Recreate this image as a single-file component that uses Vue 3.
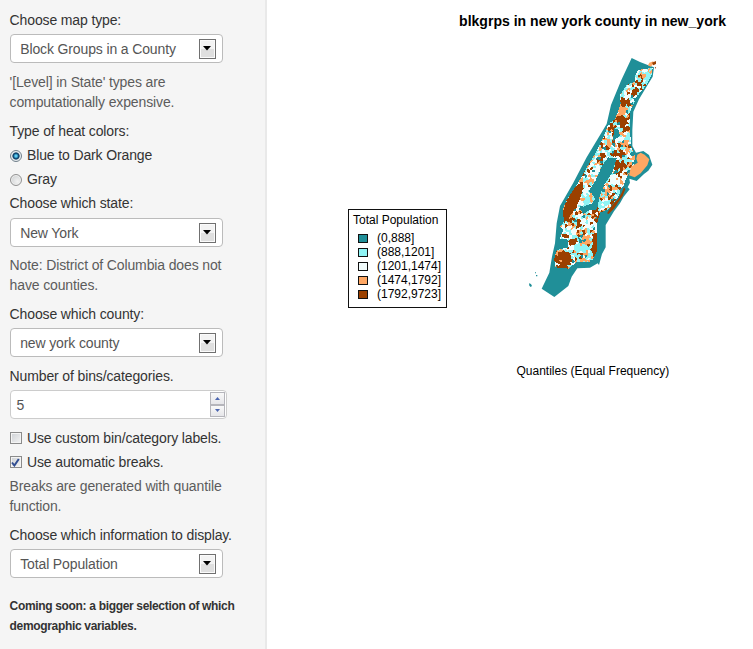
<script setup>
const teal = '#208f98'
const aqua = '#8ff4f5'
const pale = '#f2fcfc'
const orange = '#ffa763'
const brown = '#9b4000'

const bins = [
  { color: teal, label: '(0,888]' },
  { color: aqua, label: '(888,1201]' },
  { color: pale, label: '(1201,1474]' },
  { color: orange, label: '(1474,1792]' },
  { color: brown, label: '(1792,9723]' },
]

const unit = 3
const trace = (points) => points.map(([x, y]) => [x / unit, y / unit])

// County boundary, water block groups included
const boundary = trace([
  [335, 24], [360, 36], [385, 46], [402, 52], [398, 80], [384, 103], [357, 148], [340, 185], [337, 240],
  [337, 288], [348, 308], [370, 303], [387, 315], [397, 344], [385, 362], [372, 372], [350, 393],
  [328, 386], [330, 398], [323, 412], [329, 418], [311, 440], [300, 460], [282, 484], [257, 525],
  [257, 592], [246, 612], [237, 645], [233, 640], [210, 653], [172, 655], [155, 680], [145, 708],
  [103, 741], [65, 716], [88, 668], [96, 620], [105, 580], [110, 520], [120, 468], [160, 398],
  [200, 322], [260, 222], [273, 165], [303, 92],
])

const land = trace([
  [345, 75], [355, 60], [398, 53], [395, 75], [382, 100], [370, 117], [350, 140], [330, 185],
  [330, 230], [333, 290], [345, 320], [340, 350], [318, 385], [310, 410], [295, 440], [265, 478],
  [240, 488], [232, 518], [232, 600], [215, 635], [170, 636], [145, 656], [105, 652], [103, 625],
  [110, 600], [145, 592], [142, 567], [118, 568], [130, 540], [120, 530], [132, 515], [128, 480],
  [140, 450], [175, 398], [190, 370], [205, 345], [230, 303], [255, 250], [265, 222], [285, 208],
  [302, 162], [300, 135], [320, 105], [345, 95],
])

const park = [
  trace([[264, 322], [290, 325], [277, 368], [255, 400], [240, 435], [232, 472], [225, 482],
    [213, 478], [190, 492], [178, 475], [200, 466], [219, 460], [225, 445], [215, 430], [205, 424],
    [225, 395], [245, 350]]),
  trace([[283, 235], [298, 240], [298, 258], [278, 275]]),
]

// Block groups with a prevailing colour: centre, radii, rotation, colour
const patches = [
  [158, 455, 16, 62, 0.46, brown], [385, 85, 10, 30, 0.3, aqua], [358, 98, 14, 9, 0, brown],
  [345, 125, 9, 16, 0.4, brown], [365, 78, 7, 10, 0, orange], [311, 153, 12, 14, 0, brown],
  [312, 128, 9, 16, 0.3, aqua], [307, 212, 25, 11, 0.2, brown], [308, 182, 15, 12, 0, orange],
  [320, 236, 15, 9, 0, brown], [276, 236, 12, 12, 0, brown], [260, 275, 10, 14, 0.3, orange],
  [255, 290, 14, 10, 0.5, brown], [322, 295, 8, 13, 0, orange], [296, 310, 16, 9, 0, brown],
  [300, 347, 20, 13, 0, brown], [245, 325, 8, 12, 0, brown], [222, 350, 20, 20, 0, pale],
  [215, 380, 10, 14, 0, orange], [285, 390, 18, 15, 0, pale], [275, 420, 20, 10, 0, orange],
  [248, 455, 14, 22, 0.4, aqua], [136, 500, 11, 18, 0, brown],
  [206, 452, 16, 16, 0, aqua], [180, 455, 10, 14, 0, pale], [196, 495, 10, 10, 0, orange],
  [224, 482, 9, 9, 0, brown], [175, 528, 9, 18, 0, brown], [150, 548, 13, 13, 0, pale],
  [225, 580, 10, 42, 0, brown], [200, 605, 14, 9, 0, orange], [203, 570, 16, 14, 0, orange],
  [155, 577, 9, 9, 0, brown], [180, 600, 20, 15, 0, aqua], [122, 600, 12, 8, 0, orange],
  [130, 627, 26, 27, 0, brown], [192, 631, 16, 7, 0, orange], [125, 650, 22, 9, 0, brown],
  [205, 520, 22, 16, 0, pale], [135, 560, 14, 8, 0, brown],
].map(([x, y, rx, ry, turn, color]) => [x / unit, y / unit, rx / unit, ry / unit, turn, color])

function inside(x, y, poly) {
  let hit = false
  for (let i = 0, j = poly.length - 1; i < poly.length; j = i++) {
    const [ax, ay] = poly[i]
    const [bx, by] = poly[j]
    if (ay > y !== by > y && x < ((bx - ax) * (y - ay)) / (by - ay) + ax) hit = !hit
  }
  return hit
}

function hash(a, b, c) {
  let n = Math.imul(a, 374761393) + Math.imul(b, 668265263) + Math.imul(c, 974634777)
  n = Math.imul(n ^ (n >>> 13), 1274126177)
  return ((n ^ (n >>> 16)) >>> 0) / 4294967296
}

function inPatch(x, y, [cx, cy, rx, ry, turn]) {
  const dx = x - cx
  const dy = y - cy
  const u = dx * Math.cos(turn) + dy * Math.sin(turn)
  const v = -dx * Math.sin(turn) + dy * Math.cos(turn)
  return (u / rx) ** 2 + (v / ry) ** 2 < 1
}

const spacing = 2.5
function groupColor(x, y) {
  if (inPatch(x, y, patches[0])) return brown
  const gx = Math.floor(x / spacing)
  const gy = Math.floor(y / spacing)
  let best = Infinity
  let site = null
  for (let i = gx - 1; i <= gx + 1; i++) {
    for (let j = gy - 1; j <= gy + 1; j++) {
      const sx = (i + hash(i, j, 1)) * spacing
      const sy = (j + hash(i, j, 2)) * spacing
      const d = (sx - x) ** 2 + (sy - y) ** 2
      if (d < best) {
        best = d
        site = [sx, sy, hash(i, j, 3), hash(i, j, 4)]
      }
    }
  }
  const [sx, sy, r, keep] = site
  const patch = patches.find((p) => inPatch(sx, sy, p))
  if (patch) {
    const solid = patch[5] === brown ? 0.93 : 0.6
    if (keep < solid) return patch[5]
  }
  if (r < 0.08) return teal
  if (r < 0.38) return aqua
  if (r < 0.65) return pale
  if (r < 0.84) return orange
  return brown
}

const paths = Object.fromEntries(bins.map((b) => [b.color, '']))
for (let y = 0; y < 250; y++) {
  for (let x = 0; x < 136; x++) {
    const px = x + 0.5
    const py = y + 0.5
    if (!inside(px, py, land) || park.some((p) => inside(px, py, p))) continue
    paths[groupColor(px, py)] += `M${x} ${y}h1v1h-1z`
  }
}

const outline = boundary.map((p) => p.join(',')).join(' ')
</script>

<template>
  <div class="page">
    <aside class="sidebar">
      <div class="label">Choose map type:</div>
      <div class="select"><span>Block Groups in a County</span><i class="drop"><svg width="8" height="5" viewBox="0 0 8 5"><path d="M0 0h8L4 4.5z" /></svg></i></div>
      <p class="help">'[Level] in State' types are<br>computationally expensive.</p>

      <div class="label">Type of heat colors:</div>
      <div class="option"><i class="radio on"></i><span>Blue to Dark Orange</span></div>
      <div class="option"><i class="radio"></i><span>Gray</span></div>

      <div class="label state">Choose which state:</div>
      <div class="select"><span>New York</span><i class="drop"><svg width="8" height="5" viewBox="0 0 8 5"><path d="M0 0h8L4 4.5z" /></svg></i></div>
      <p class="help">Note: District of Columbia does not<br>have counties.</p>

      <div class="label">Choose which county:</div>
      <div class="select county"><span>new york county</span><i class="drop"><svg width="8" height="5" viewBox="0 0 8 5"><path d="M0 0h8L4 4.5z" /></svg></i></div>

      <div class="label">Number of bins/categories.</div>
      <div class="number">
        <span>5</span>
        <div class="spinner">
          <i><svg width="5" height="3" viewBox="0 0 5 3"><path d="M0 3h5L2.5 0z" /></svg></i>
          <i><svg width="5" height="3" viewBox="0 0 5 3"><path d="M0 0h5L2.5 3z" /></svg></i>
        </div>
      </div>

      <div class="option"><i class="check"></i><span>Use custom bin/category labels.</span></div>
      <div class="option"><i class="check"><svg width="9" height="9" viewBox="0 0 9 9"><path d="M1 4.5l2.4 3L7.8 1" /></svg></i><span>Use automatic breaks.</span></div>
      <p class="help breaks">Breaks are generated with quantile<br>function.</p>

      <div class="label">Choose which information to display.</div>
      <div class="select"><span>Total Population</span><i class="drop"><svg width="8" height="5" viewBox="0 0 8 5"><path d="M0 0h8L4 4.5z" /></svg></i></div>
      <p class="soon">Coming soon: a bigger selection of which<br>demographic variables.</p>
    </aside>

    <main class="plot">
      <h1>blkgrps in new york county in new_york</h1>
      <div class="figure">
        <div class="legend">
          <div class="legend-title">Total Population</div>
          <div v-for="b in bins" :key="b.label" class="bin">
            <svg width="10" height="9"><rect x=".5" y=".5" width="9" height="8" :fill="b.color" stroke="#111" /></svg>
            <span>{{ b.label }}</span>
          </div>
        </div>
        <svg class="map" width="136" height="250" viewBox="0 0 136 250">
          <polygon :points="outline" :fill="teal" />
          <g shape-rendering="crispEdges">
            <path v-for="b in bins" :key="b.label" :d="paths[b.color]" :fill="b.color" />
          </g>
          <g transform="scale(.33333)">
            <path d="M352 314l10-6 12 6 14 14-6 18-20 24-18 12-17-6 6-26 20-12-4-12z" :fill="orange" />
            <path d="M312 412l4 6-8 20-14 20-12 18-16 16-5-2 16-26 18-18 10-18z" :fill="brown" />
            <path d="M384 46l4-8 12-4 2 6-10 10z" :fill="orange" />
            <path d="M396 38l12-5 10 4 3 9-7 12-10-4 6-6-2-6-8 4z" :fill="brown" />
            <path d="M27 700l6 2 3 6-4 3-4-4zM45 667h3v3h-3zM48 675h4v4h-4z" :fill="teal" />
          </g>
        </svg>
      </div>
      <div class="caption">Quantiles (Equal Frequency)</div>
    </main>
  </div>
</template>

<style>
body {
  background: #fff;
}
</style>

<style scoped>
.page {
  display: flex;
  width: 753px;
  height: 649px;
  overflow: hidden;
  font-family: "Liberation Sans", Arial, sans-serif;
  background: #fff;
}
.sidebar {
  box-sizing: border-box;
  width: 267px;
  flex: none;
  padding: 10px 0 0 9.6px;
  background: #f5f5f5;
  border-right: 2px solid #e9e9e9;
  color: #333;
  font-size: 14px;
  letter-spacing: -0.13px;
  white-space: nowrap;
}
.label,
.option {
  height: 20px;
  line-height: 20px;
  margin-bottom: 4px;
}
.label.state {
  margin-bottom: 5px;
}
.help,
.soon {
  margin: 0 0 9px;
  line-height: 19.5px;
  color: #5c5c5c;
}
.help.breaks {
  margin-top: 5px;
}
.select {
  box-sizing: border-box;
  display: flex;
  align-items: center;
  justify-content: space-between;
  width: 213px;
  height: 29px;
  margin-bottom: 10px;
  padding: 0 6px 0 9.6px;
  border: 1px solid #bbb;
  border-radius: 4px;
  background: #fff;
  color: #555;
}
.label.state + .select {
  margin-bottom: 9px;
}
.select.county {
  margin-bottom: 9px;
}
.drop {
  box-sizing: border-box;
  display: flex;
  align-items: center;
  justify-content: center;
  width: 17px;
  height: 20px;
  border: 1px solid #707070;
  background: linear-gradient(#f3f3f3 0 48%, #dfdfdf 52% 100%);
  box-shadow: inset 0 0 0 1px #fbfbfb;
}
.drop path {
  fill: #000;
}
.option {
  display: flex;
  align-items: center;
  gap: 5.4px;
}
.radio,
.check {
  box-sizing: border-box;
  width: 12px;
  height: 12px;
  flex: none;
}
.radio {
  margin-top: 1px;
  border: 1px solid #929292;
  border-radius: 50%;
  background: radial-gradient(circle at 65% 65%, #f2f2f2, #c8cbcd);
  box-shadow: inset 0 0 0 1px #f0f0f0;
}
.radio.on {
  border-color: #71808a;
  background: radial-gradient(circle, #5ccdf1 0 1px, #0d4e7d 2.5px, #123d5d 3.2px, #e8edf0 4px);
  box-shadow: none;
}
.check {
  display: flex;
  align-items: center;
  justify-content: center;
  border: 1px solid #8b8b8b;
  background: linear-gradient(135deg, #cdd0d4, #f4f4f4);
  box-shadow: inset 0 0 0 1px #f4f4f4;
}
.check path {
  fill: none;
  stroke: #304d91;
  stroke-width: 2;
}
.number {
  box-sizing: border-box;
  display: flex;
  align-items: center;
  justify-content: space-between;
  width: 217px;
  height: 29px;
  margin-bottom: 9px;
  padding: 0 1px 0 6px;
  border: 1px solid #ccc;
  border-radius: 4px;
  background: #fff;
  color: #555;
}
.spinner {
  display: flex;
  flex-direction: column;
}
.spinner i {
  box-sizing: border-box;
  display: flex;
  align-items: center;
  justify-content: center;
  width: 15px;
  height: 12.5px;
  border: 1px solid #b5b5bb;
  background: linear-gradient(#f9f9f9, #e6e6e9);
}
.spinner path {
  fill: #4c66b0;
}
.soon {
  margin-top: 19px;
  color: #333;
  font-size: 12px;
  letter-spacing: -0.33px;
  font-weight: bold;
}
.plot {
  flex: 1;
  display: flex;
  flex-direction: column;
  color: #000;
}
h1 {
  margin: 13px 27px 0 0;
  font-size: 14.05px;
  line-height: 16px;
  text-align: right;
  white-space: nowrap;
}
.figure {
  display: flex;
  align-items: flex-start;
  margin-top: 21px;
  padding-left: 81px;
}
.legend {
  box-sizing: border-box;
  width: 99px;
  height: 99px;
  margin-top: 159px;
  padding: 3px 0 0 4px;
  border: 1px solid #111;
  font-size: 12px;
  white-space: nowrap;
}
.legend-title {
  height: 18px;
  line-height: 15px;
}
.bin {
  display: flex;
  align-items: center;
  gap: 9.5px;
  height: 14px;
  padding-left: 4.5px;
  line-height: 15px;
}
.map {
  display: block;
  margin-left: 73px;
}
.caption {
  margin: 55px 0 0 249.5px;
  font-size: 12px;
  line-height: 16px;
}
</style>
